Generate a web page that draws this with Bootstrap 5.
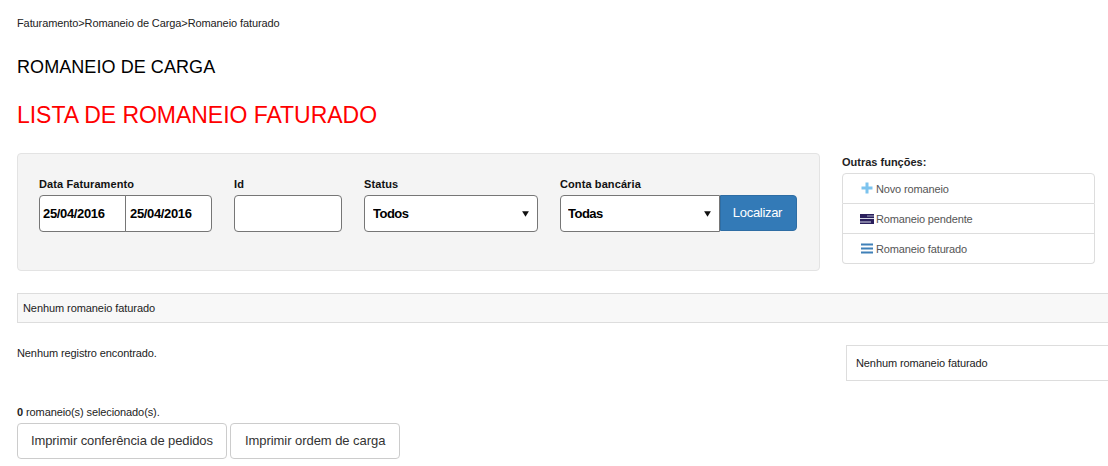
<!DOCTYPE html>
<html lang="pt-br">

<head>
    <meta charset="UTF-8">
    <title>Romaneio faturado</title>
    <link href="https://cdn.jsdelivr.net/npm/bootstrap@5.3.3/dist/css/bootstrap.min.css" rel="stylesheet">
    <style>
        html, body { overflow: hidden; }
        body { font-family: "Liberation Sans", Arial, sans-serif; font-size: 11px; color: #222; background: #fff; }
        .pagina { padding: 16px 0 0 17px; }
        .trilha { line-height: 14px; height: 14px; margin-bottom: 25px; font-size: 11px; letter-spacing: -.1px; }
        .titulo-sec { font-size: 18px; line-height: 24px; margin: 0 0 20px; color: #000; letter-spacing: .07px; }
        .titulo-lista { font-size: 23px; line-height: 32px; margin: 0 0 22px; color: #f00; letter-spacing: -.03px; }
        .painel-filtro { width: 803px; height: 118px; background: #f4f4f4; border: 1px solid #e3e3e3; border-radius: 4px; padding: 23px 22px 0 21px; gap: 22px; }
        .rotulo { display: block; font-weight: 700; font-size: 11px; line-height: 14px; margin-bottom: 4px; color: #111; letter-spacing: .1px; }
        .campo { height: 37px; border: 1px solid #767676; border-radius: 4px; background-color: #fff; font-size: 13px; font-weight: 700; color: #000; padding: 0 3px; box-shadow: none; }
        .campo-data { width: 87px; letter-spacing: -.35px; }
        .campo-data + .campo-data { margin-left: -1px; padding-left: 4px; }
        .campo-id { width: 108px; }
        .campo-status { width: 174px; padding-left: 8px; letter-spacing: -.5px; }
        .campo-conta { width: 160px; padding-left: 7px; letter-spacing: -.5px; }
        .campo-sel { background-image: url("data:image/svg+xml,%3csvg xmlns='http://www.w3.org/2000/svg' viewBox='0 0 8 7'%3e%3cpath d='M1 1h6L4 6z' fill='%23111'/%3e%3c/svg%3e"); background-size: 9px 8px; background-position: right 7px center; }
        .btn-localizar { width: 77px; height: 36px; background: #337ab7; border: 1px solid #2e6da4; color: #fff; font-size: 13px; padding: 0 2px 0 0; border-radius: 0 4px 4px 0; letter-spacing: -.3px; }
        .coluna-funcoes { width: 253px; margin-left: 22px; padding-top: 2px; }
        .coluna-funcoes .rotulo { margin-bottom: 4px; color: #222; letter-spacing: 0; }
        .lista-funcoes { border-radius: 4px; }
        .lista-funcoes .list-group-item { height: 30px; padding: 1px 0 0 17px; display: flex; align-items: center; gap: 2px; font-size: 11px; color: #555; border-color: #ddd; letter-spacing: -.15px; }
        .lista-funcoes .list-group-item:first-child { height: 31px; }
        .ico-funcao { width: 14px; height: 14px; flex: none; margin-top: -3px; }
        .faixa { height: 30px; margin-top: 22px; background: #f8f8f8; border: 1px solid #ddd; border-right: 0; padding-left: 5px; line-height: 28px; letter-spacing: -.08px; color: #222; }
        .linha-vazia { margin-top: 22px; height: 36px; }
        .linha-vazia p { margin: 0; padding-top: 1px; line-height: 14px; letter-spacing: -.1px; }
        .caixa-vazia { width: 262px; height: 36px; border: 1px solid #ddd; border-right: 0; padding-left: 9px; line-height: 34px; letter-spacing: -.1px; }
        .selecionados { margin-top: 24px; line-height: 14px; letter-spacing: -.1px; }
        .acoes { margin-top: 4px; gap: 3px; }
        .btn-imprimir { height: 36px; border: 1px solid #ccc; border-radius: 4px; background: #fff; color: #333; font-size: 13px; padding: 0 13px; letter-spacing: -.1px; }
        .btn-imprimir + .btn-imprimir { padding: 0 14px; letter-spacing: -.05px; }
    </style>
</head>

<body>
    <div class="pagina">
        <div class="trilha">Faturamento&gt;Romaneio de Carga&gt;Romaneio faturado</div>
        <h1 class="titulo-sec">ROMANEIO DE CARGA</h1>
        <h2 class="titulo-lista">LISTA DE ROMANEIO FATURADO</h2>

        <div class="d-flex">
            <!-- filtros -->
            <form class="painel-filtro d-flex">
                <div>
                    <label class="rotulo">Data Faturamento</label>
                    <div class="d-flex">
                        <input type="text" class="form-control campo campo-data rounded-end-0" value="25/04/2016">
                        <input type="text" class="form-control campo campo-data rounded-start-0" value="25/04/2016">
                    </div>
                </div>
                <div>
                    <label class="rotulo">Id</label>
                    <input type="text" class="form-control campo campo-id">
                </div>
                <div>
                    <label class="rotulo">Status</label>
                    <select class="form-select campo campo-sel campo-status">
                        <option>Todos</option>
                    </select>
                </div>
                <div>
                    <label class="rotulo">Conta bancária</label>
                    <div class="d-flex">
                        <select class="form-select campo campo-sel campo-conta rounded-end-0">
                            <option>Todas</option>
                        </select>
                        <button type="button" class="btn btn-localizar">Localizar</button>
                    </div>
                </div>
            </form>

            <!-- outras funcoes -->
            <div class="coluna-funcoes">
                <span class="rotulo">Outras funções:</span>
                <div class="list-group lista-funcoes">
                    <a href="#" class="list-group-item list-group-item-action">
                        <svg class="ico-funcao" viewBox="0 0 14 14"><path d="M5.500 1.500h3v4h4v3h-4v4h-3v-4h-4v-3h4z" fill="#7cc3ee"/></svg>
                        Novo romaneio
                    </a>
                    <a href="#" class="list-group-item list-group-item-action">
                        <svg class="ico-funcao" viewBox="0 0 14 14"><rect y="3" width="14" height="10" fill="#2a1f5c"/><path d="M0 7.500h14M0 11h11" stroke="#d5d9e6" stroke-width="1"/><path d="M7 5h7" stroke="#a3a9c2" stroke-width="1"/></svg>
                        Romaneio pendente
                    </a>
                    <a href="#" class="list-group-item list-group-item-action">
                        <svg class="ico-funcao" viewBox="0 0 14 14"><path d="M1 3.500h12M1 7.500h12M1 11.500h12" stroke="#3f80b8" stroke-width="2"/></svg>
                        Romaneio faturado
                    </a>
                </div>
            </div>
        </div>

        <div class="faixa">Nenhum romaneio faturado</div>

        <div class="linha-vazia d-flex justify-content-between">
            <p>Nenhum registro encontrado.</p>
            <div class="caixa-vazia">Nenhum romaneio faturado</div>
        </div>

        <div class="selecionados"><strong>0</strong> romaneio(s) selecionado(s).</div>
        <div class="acoes d-flex">
            <button type="button" class="btn btn-imprimir">Imprimir conferência de pedidos</button>
            <button type="button" class="btn btn-imprimir">Imprimir ordem de carga</button>
        </div>
    </div>
</body>

</html>
